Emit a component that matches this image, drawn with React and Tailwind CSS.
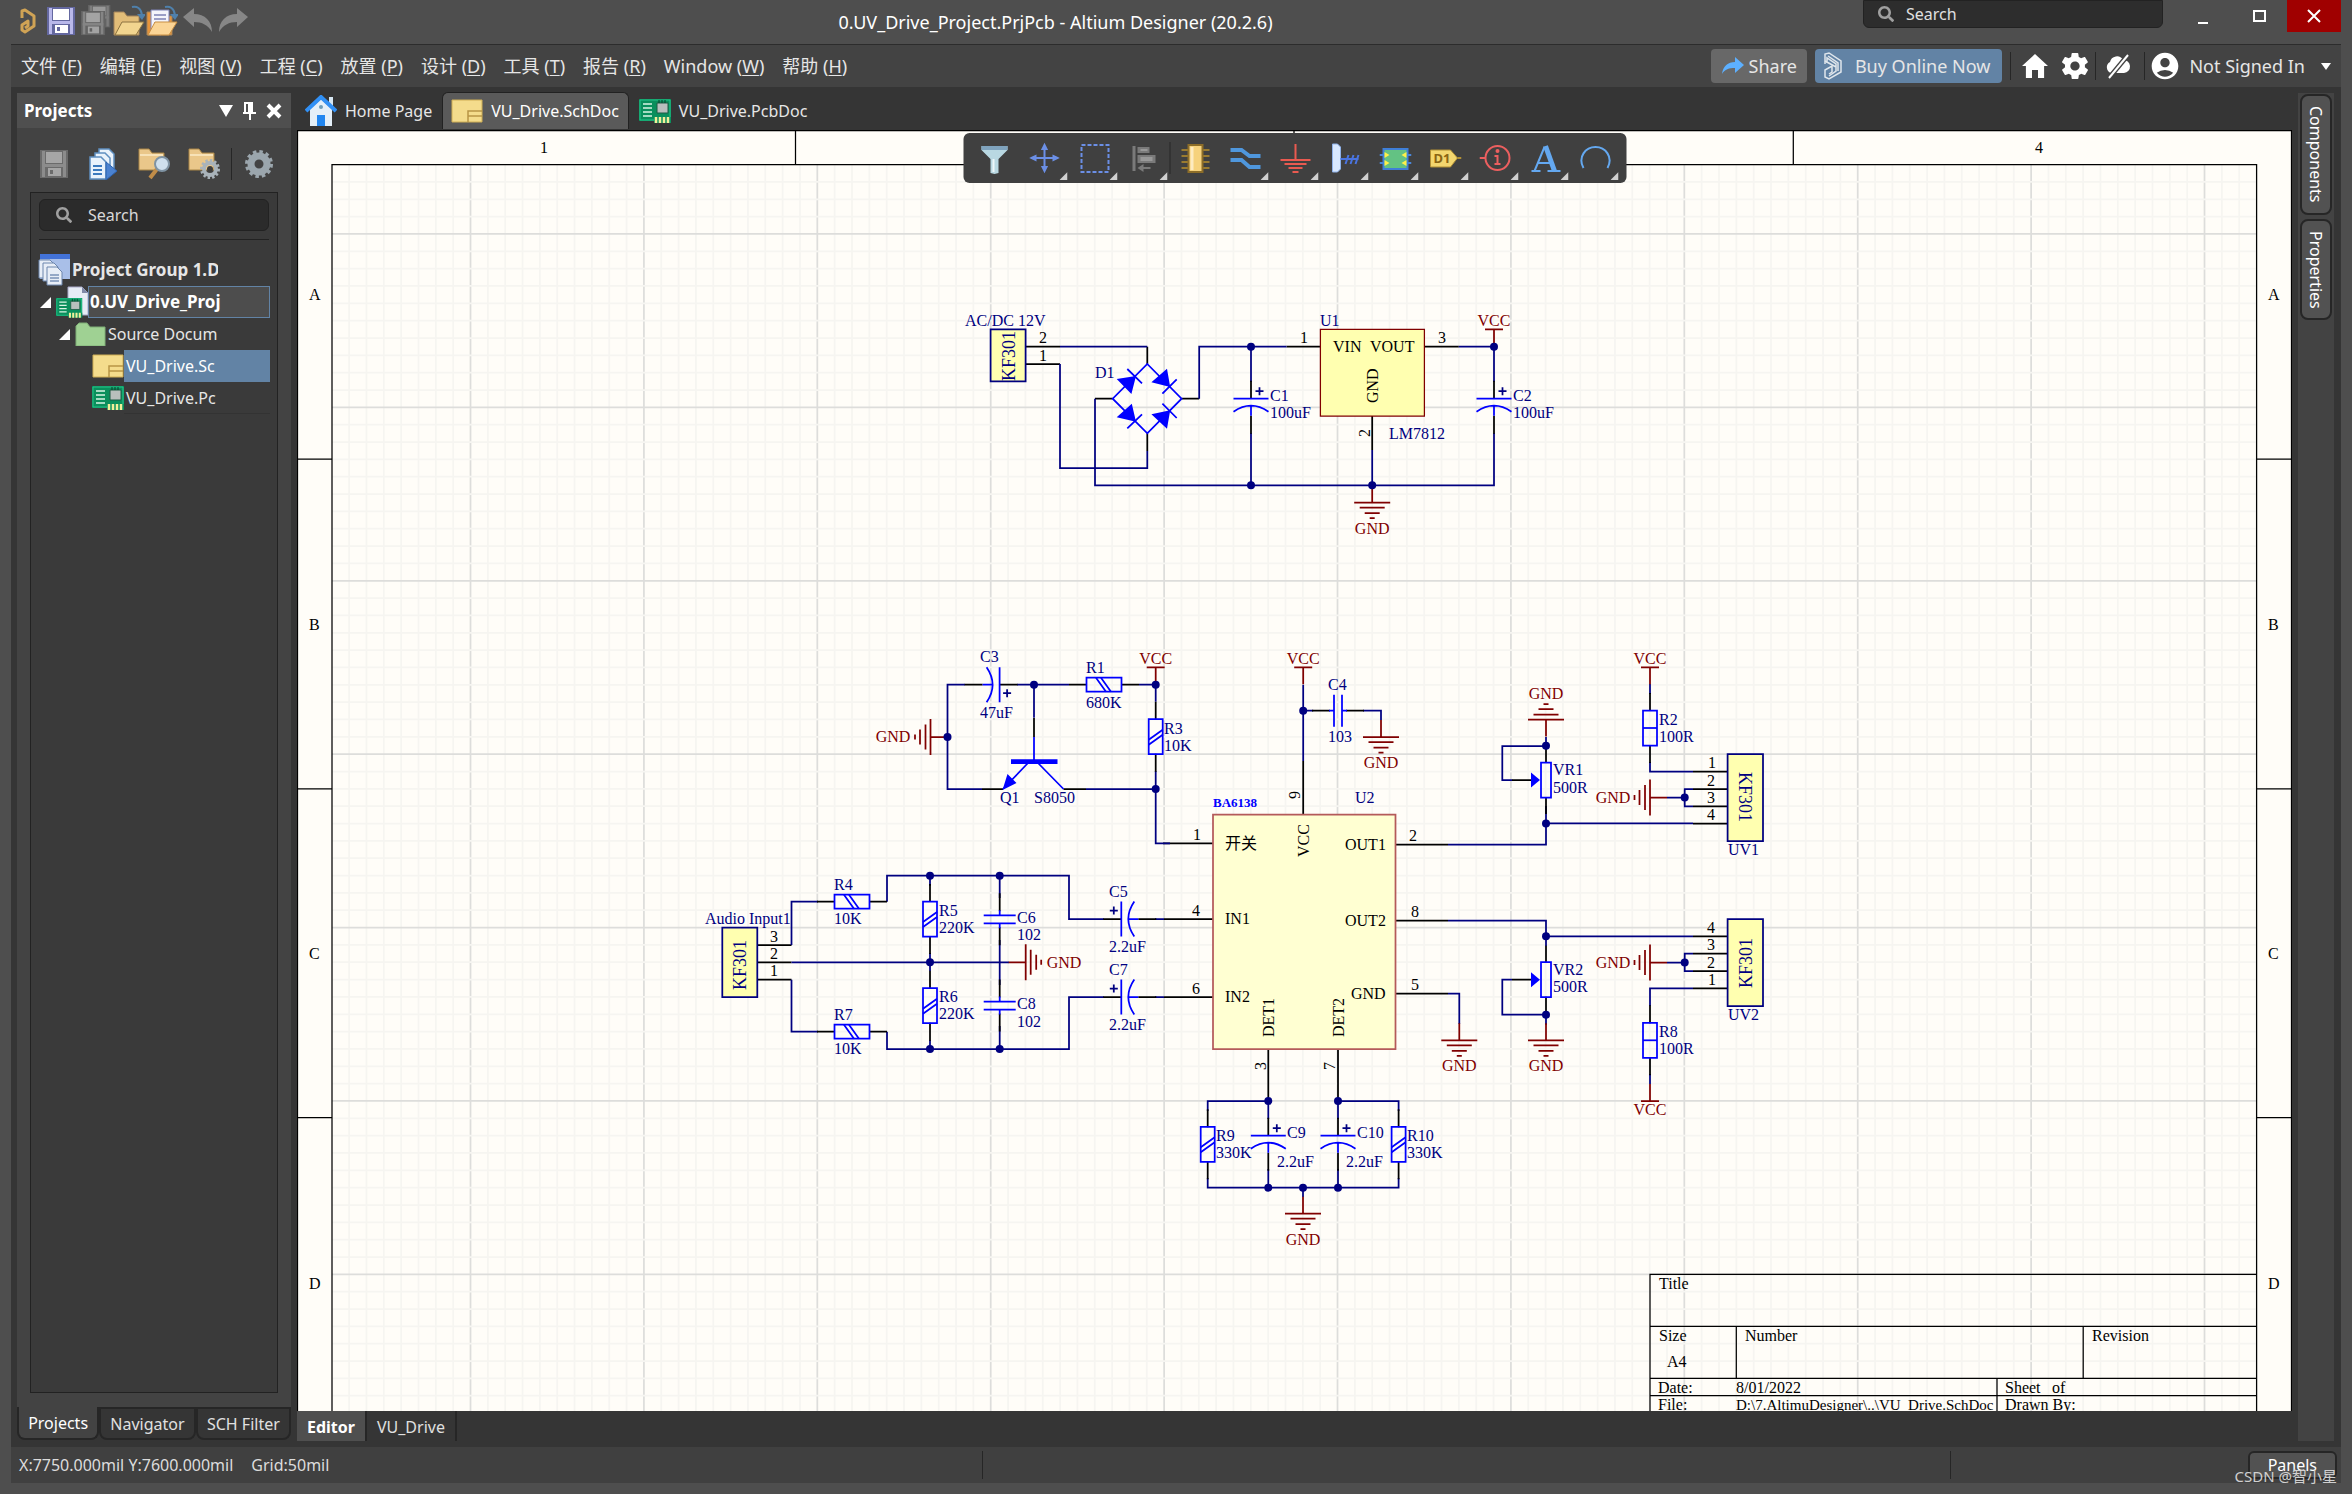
import { Fragment } from 'react';
import clsx from 'clsx';
import { IoMdHome, IoMdSettings } from 'react-icons/io';
import { MdAccountCircle } from 'react-icons/md';
import { FaSearch } from 'react-icons/fa';

const menus = [
  ['文件', 'F'],
  ['编辑', 'E'],
  ['视图', 'V'],
  ['工程', 'C'],
  ['放置', 'P'],
  ['设计', 'D'],
  ['工具', 'T'],
  ['报告', 'R'],
  ['Window', 'W'],
  ['帮助', 'H'],
];

/* ---------- icons ---------- */

const Logo = () => (
  <svg className="w-4 h-7" viewBox="0 0 16 28" fill="none" stroke="#d0a355" strokeWidth="3">
    <path d="M2 11V4l3-1 9 6v10l-9 6-3-2v-5l6-4v5l-3 2" strokeLinejoin="round" />
  </svg>
);

const Floppy = ({ edge, body, label }) => (
  <>
    <path d="M0 0h28v28H0z" fill={edge} />
    <path d="M2 1h3v26H2zM23 1h3v26h-3z" fill={body} />
    <path d="M6 2h16v11H6z" fill={label} />
    <path d="M2 14h24v3H2z" fill={body} />
    <path d="M8 18h13v8H8z" fill={label} />
    <path d="M10 20h3v4h-3z" fill={edge} />
  </>
);

const SaveIcon = ({ disabled }) => (
  <svg className="w-7 h-7" viewBox="0 0 28 28">
    {disabled ? (
      <Floppy edge="#6b6b6b" body="#8c8c8c" label="#a6a6a6" />
    ) : (
      <Floppy edge="#6468a0" body="#b9b8ea" label="#ffffff" />
    )}
  </svg>
);

const SaveAllIcon = () => (
  <svg className="w-8 h-8" viewBox="0 0 32 32">
    <g transform="translate(8 0) scale(.8)">
      <Floppy edge="#636363" body="#7d7d7d" label="#999999" />
    </g>
    <g transform="translate(1 6) scale(.86)">
      <Floppy edge="#636363" body="#858585" label="#a3a3a3" />
    </g>
  </svg>
);

const OpenIcon = ({ doc }) => (
  <svg className="w-8 h-8" viewBox="0 0 32 32">
    <path d="M1 30V7h10l3 4h12v19z" fill={doc ? '#e8943a' : '#e2bd78'} stroke="#a4845a" />
    {doc && (
      <>
        <path d="M5 28V5h18v16l-8 9z" fill="#f4f4fb" stroke="#7d81b5" />
        <path d="M8 10h12M8 14h12M8 18h10" stroke="#7d81b5" strokeWidth="1.5" />
      </>
    )}
    <path d="M9 17h22L23 30H2z" fill={doc ? '#fbd596' : '#f2d58f'} stroke={doc ? '#c98f42' : '#8c7340'} />
    <path d="M19 2c5-1 9 1 10 8" fill="none" stroke="#4f80ab" strokeWidth="2" />
    <path d="M24 9h9l-4 6z" fill="#4f80ab" />
  </svg>
);

const UndoIcon = ({ flip }) => (
  <svg className={clsx('w-8 h-8', flip && '-scale-x-100')} viewBox="0 0 32 32">
    <path d="M0 12L11 3v6c11 0 18 7 18 18-4-7-10-10-18-10v5z" fill="#878787" />
  </svg>
);

const DocsIcon = () => (
  <svg className="w-8 h-8" viewBox="0 0 32 32">
    <g stroke="#5f8fc0" fill="#e9f2fb" strokeWidth="1.5">
      <path d="M11 1h10l5 5v17H11z" />
      <path d="M7 5h10l5 5v17H7z" />
      <path d="M2 9h11l5 5v17H2z" />
    </g>
    <path d="M5 18h9M5 22h9M5 26h9" stroke="#3b79bd" strokeWidth="2" />
    <path d="M18 14l11 9-11 9z" fill="#4b82d0" stroke="#2b62b0" />
  </svg>
);

const FolderTool = ({ gear }) => (
  <svg className="w-8 h-8" viewBox="0 0 32 32">
    <path d="M1 22V1h10l3 4h12v17z" fill="#eac78a" stroke="#a98547" />
    <path d="M2 7h23" stroke="#f7e2b8" strokeWidth="2" />
    {gear ? (
      <>
        <circle cx="22" cy="21" r="8.5" fill="none" stroke="#a9b3ba" strokeWidth="3" strokeDasharray="2.4 2" />
        <circle cx="22" cy="21" r="6" fill="none" stroke="#a9b3ba" strokeWidth="4" />
        <circle cx="22" cy="21" r="3" fill="#3d3d3d" />
      </>
    ) : (
      <>
        <path d="M19 21l-7 9" stroke="#c08c48" strokeWidth="4" />
        <circle cx="24" cy="16" r="7" fill="#cfe0ee" stroke="#7f93a3" strokeWidth="2" />
      </>
    )}
  </svg>
);

const GearIcon = () => (
  <svg className="w-8 h-8" viewBox="0 0 32 32" fill="none" stroke="#9ba6ad">
    <circle cx="16" cy="16" r="12" strokeWidth="4" strokeDasharray="3.4 2.88" />
    <circle cx="16" cy="16" r="8" strokeWidth="7" />
  </svg>
);

const SchIcon = () => (
  <svg className="w-8 h-6" viewBox="0 0 32 24">
    <path d="M1 1h30v22H1z" fill="#f4dc8c" stroke="#cfae55" />
    <path d="M17 23V12h14M17 17h14" fill="none" stroke="#b89545" strokeWidth="1.5" />
  </svg>
);

const PcbArt = () => (
  <>
    <path d="M0 0h32v22H0z" fill="#0a8f5c" />
    <path d="M1 1h30v20H1z" fill="none" stroke="#24c48a" />
    <path d="M4 5h9M4 9h9M4 13h9M4 17h9" stroke="#d8f5e4" strokeWidth="1.5" />
    <path d="M18 4h11v10H18z" fill="#b9bfbd" stroke="#1d5c44" />
    <path d="M20 1v3M23 1v3M26 1v3" stroke="#06402a" />
    <path d="M15 18h17v6H15z" fill="#0a8f5c" />
    <path d="M17 18v6M21 18v6M25 18v6M29 18v6" stroke="#f3ef9a" strokeWidth="2.5" />
  </>
);

const PcbIcon = () => (
  <svg className="w-8 h-6" viewBox="0 0 32 24">
    <PcbArt />
  </svg>
);

const ProjectIcon = () => (
  <svg className="w-8 h-8" viewBox="0 0 32 32">
    <path d="M12 1h14l6 6v22H12z" fill="#e6ecf5" stroke="#a9a9c9" />
    <path d="M26 1v6h6z" fill="#7f89a8" />
    <g transform="translate(0 12) scale(.82)">
      <PcbArt />
    </g>
  </svg>
);

const GroupIcon = () => (
  <svg className="w-8 h-8" viewBox="0 0 32 32">
    <path d="M2 0h30v25H2z" fill="#a9bfe8" />
    <path d="M2 0h30v5H2z" fill="#4272d8" />
    <g fill="#e8eef7" stroke="#6d86ad">
      <path d="M1 6h11l4 4v14H1z" />
      <path d="M5 9h11l4 4v14H5z" />
      <path d="M9 13h10l5 5v13H9z" />
    </g>
    <path d="M12 21h9M12 24h9M12 27h9" stroke="#7a93b8" strokeWidth="1.5" />
  </svg>
);

const FolderIcon = () => (
  <svg className="w-8 h-6" viewBox="0 0 32 24">
    <path d="M1 24V4l3-3h8l3 4h15v19z" fill="#9fd193" stroke="#7fae76" />
  </svg>
);

const HouseIcon = () => (
  <svg className="w-8 h-8" viewBox="0 0 32 32">
    <path d="M24 2h4v10h-4z" fill="#d6e6f2" />
    <path d="M5 14L16 4l11 10v17H5z" fill="#e4eff8" />
    <path d="M1 16L16 2l15 14" fill="none" stroke="#3190f5" strokeWidth="4" />
    <circle cx="16" cy="12" r="2" fill="#6f9db8" />
    <path d="M12 20h8v11h-8z" fill="#2186f0" />
  </svg>
);

const BuyIcon = () => (
  <svg className="w-5 h-7" viewBox="0 0 20 28" fill="none" stroke="#dfe6ec" strokeWidth="1.5">
    <path d="M2 12V2l4-1 12 8v11L6 27l-4-2v-7l7-4v6l-3 2" />
    <path d="M4 11V6l9 6v7l-7 5M2 9l11 6M5 4l10 7v8" />
  </svg>
);

const CloudOff = () => (
  <svg className="w-7 h-7" viewBox="0 0 28 28">
    <path d="M7 21a6 6 0 0 1-1-11 7 7 0 0 1 13-2 6 6 0 0 1 1 13z" fill="#fff" />
    <path d="M24 3L5 26" stroke="#434343" strokeWidth="5" />
    <path d="M24 3L5 26" stroke="#fff" strokeWidth="2" />
  </svg>
);

const tools = [
  {
    name: 'Filter',
    art: (
      <>
        <path d="M3 4h26v4l-9 9v14l-4 1-4-1V17L3 8z" fill="#b9d8e2" />
        <path d="M3 4h26v4H3z" fill="#7fa3bd" />
        <path d="M14 17h2v13h-2z" fill="#eef7fa" />
      </>
    ),
  },
  {
    name: 'Move',
    more: true,
    art: (
      <g stroke="#6b8fe6" strokeWidth="2" fill="#6b8fe6">
        <path d="M16 4v24M4 16h24" />
        <path d="M16 3l2 4h-4zM16 29l2-4h-4zM3 16l4-2v4zM29 16l-4-2v4z" />
      </g>
    ),
  },
  {
    name: 'Select',
    more: true,
    art: <path d="M3 3h27v27H3z" fill="none" stroke="#6b8fe6" strokeWidth="2" strokeDasharray="4 2" />,
  },
  {
    name: 'Align',
    more: true,
    art: (
      <g fill="#7a7a7a">
        <path d="M4 4h3v25H4z" />
        <path d="M9 5h12v6H9zM9 13h18v8H9zM9 26l6-4v3h7v2h-7v3z" />
        <path d="M12 7h7v2h-7zM12 15h12v4H12z" fill="#999" />
      </g>
    ),
  },
  {
    name: 'Part',
    divider: true,
    art: (
      <>
        <path d="M2 8h28M2 14h28M2 20h28M2 26h28" stroke="#9a7b30" strokeWidth="2" />
        <path d="M9 3h14v27H9z" fill="#f6d27c" stroke="#8c6d28" strokeWidth="2" />
        <path d="M11 5h3v23h-3z" fill="#fdebc0" />
      </>
    ),
  },
  {
    name: 'Wire',
    more: true,
    art: (
      <g fill="none" stroke="#4f97dd" strokeWidth="4">
        <path d="M1 8h11l8 6h11" />
        <path d="M1 18h11l8 7h11" />
      </g>
    ),
  },
  {
    name: 'GND power port',
    more: true,
    art: <path d="M16 2v16M1 18h30M5 22h22M9 26h14M13 30h6" stroke="#ea5a50" strokeWidth="2" />,
  },
  {
    name: 'Bus entry',
    more: true,
    art: (
      <>
        <path d="M3 2h5l3 3v22l-3 3H3z" fill="#d8e8ff" stroke="#8fb2ea" />
        <path d="M11 17h18" stroke="#4a74e0" strokeWidth="2" />
        <path d="M16 22l3-9M21 22l3-9M26 22l3-9" stroke="#4a74e0" strokeWidth="2" />
      </>
    ),
  },
  {
    name: 'Sheet symbol',
    more: true,
    art: (
      <>
        <path d="M0 13h32M0 21h32" stroke="#4a86d8" strokeWidth="2" />
        <path d="M4 7h24v20H4z" fill="#63c283" stroke="#3f7fd8" strokeWidth="2" />
        <path d="M5 10l5 3-5 3zM5 18l5 3-5 3zM27 10l-5 3 5 3zM27 18l-5 3 5 3z" fill="#fff04a" />
      </>
    ),
  },
  {
    name: 'Port',
    more: true,
    art: (
      <>
        <path d="M1 8h20l7 8-7 9H1z" fill="#f3d66e" stroke="#b08f35" />
        <path d="M28 16h4" stroke="#b08f35" strokeWidth="2" />
        <text x="4" y="21" fontSize="13" fontWeight="700" fill="#8a6412">
          D1
        </text>
      </>
    ),
  },
  {
    name: 'Directive',
    more: true,
    art: (
      <g fill="none" stroke="#ec5f5f" strokeWidth="2">
        <circle cx="18" cy="16" r="12" />
        <path d="M0 16h6M15 14h3v8M15 22h6" />
        <circle cx="18" cy="9" r="1" />
      </g>
    ),
  },
  {
    name: 'Text string',
    more: true,
    art: (
      <g fill="none" stroke="#64a8f0">
        <path d="M15 5L5 29M9 21h12" strokeWidth="2" />
        <path d="M16 4l9 25" strokeWidth="5" />
        <path d="M2 29h9M18 29h13" strokeWidth="2" />
      </g>
    ),
  },
  {
    name: 'Arc',
    more: true,
    art: <path d="M4 26C-2 15 6 5 16 5s18 10 12 21" fill="none" stroke="#64a8f0" strokeWidth="2" />,
  },
];

/* ---------- schematic ---------- */

const NAVY = '#000080';
const BLUE = '#0000ff';
const RED = '#800000';

const Label = ({ x, y, children, color = NAVY, anchor, size = 16, rot = 0, bold }) => (
  <text
    transform={`translate(${x} ${y}) rotate(${rot})`}
    fill={color}
    fontSize={size}
    fontWeight={bold ? 700 : 400}
    textAnchor={anchor}
  >
    {children}
  </text>
);

const Dot = ({ x, y }) => <circle cx={x} cy={y} r="4" fill={NAVY} />;

const Gnd = ({ x, y, rot = 0, tx, ty }) => (
  <>
    <path
      transform={`translate(${x} ${y}) rotate(${rot})`}
      d="M0-17V0M-18 0h36M-12.5 5h25M-7.5 10.5h15M-2.5 15.5h5"
      stroke={RED}
    />
    <Label x={tx ?? x} y={ty ?? y + 31} color={RED} anchor="middle">
      GND
    </Label>
  </>
);

const Vcc = ({ x, y, down }) => (
  <>
    <path d={`M${x - 9} ${y}h18M${x} ${y}v${down ? -17 : 17}`} stroke={RED} />
    <Label x={x} y={down ? y + 14 : y - 3} color={RED} anchor="middle">
      VCC
    </Label>
  </>
);

// origin is the flat plate, the curved one sits below it
const PolarCap = ({ x, y, rot = 0 }) => (
  <g transform={`translate(${x} ${y}) rotate(${rot})`}>
    <path d="M0-18V0M0 17v18" stroke="#000" />
    <path d="M-17.5 0h35M-17.5 13Q0 1 17.5 13M0 7v10" stroke={BLUE} />
    <path d="M4.5-7.5h8M8.5-11.5v8" stroke={NAVY} />
  </g>
);

const Cap = ({ x, y, rot = 0 }) => (
  <g transform={`translate(${x} ${y}) rotate(${rot})`}>
    <path d="M0-26V-8M0 8V26" stroke="#000" />
    <path d="M-16-4h32M-16 4h32M0-9v5M0 4v5" stroke={BLUE} />
  </g>
);

const Res = ({ x, y, rot = 0, plain }) => (
  <g transform={`translate(${x} ${y}) rotate(${rot})`}>
    <path d="M0-35v18M0 17v18" stroke="#000" />
    <path d="M-7-17.5H7v35H-7z" stroke={BLUE} />
    <path d={plain ? 'M-7 0H7' : 'M-7 3L7-7M-7 8L7-2'} stroke={BLUE} />
  </g>
);

const Pot = ({ x, y }) => (
  <>
    <path d={`M${x} ${y - 34}v17M${x} ${y + 17}v17M${x - 34} ${y}h19`} stroke="#000" />
    <path d={`M${x - 5} ${y - 17.5}h10v35h-10z`} stroke={BLUE} />
    <path d={`M${x - 15} ${y - 7.5}l9 7.5-9 7.5z`} fill={BLUE} />
  </>
);

const wires = [
  'M1060 346.7h87.3M1060 364v104h87.3v-17',
  'M1095 398.7v86.6H1494V433M1251 433v52.3M1372.2 450v35.3',
  'M1199.2 398.7v-52h87.3M1251 346.7v35M1458.8 346.7H1494v35',
  'M965 684.7h-17.5V789H982M1017 684.7h52M1034 684.7v33M1139 684.7h16.7v17M1086 789h69.7v54.3H1170M1155.7 771v18',
  'M1303.2 684.7V761M1303.2 710.7h10M1363 710.7h18V720',
  'M1448 844.5h98v-21.2H1693M1448 920.7h98v15.6H1693M1448 993.5h11.3V1024',
  'M1546 737v9h-43.7v34h10M1546 806v17M1546 936v10M1512 979.7h-9.7v35H1546v10',
  'M1650 684v10M1650 762v9.5h43M1693 789h-8.3v17.3h8.3M1684.7 797.6H1667',
  'M1650 1006v-17.7h43M1650 1074v10M1693 953.6h-8.3V971h8.3M1684.7 962.6H1667',
  'M791.5 945v-43.3H818M791.5 979.7v52H818M791.5 962.3H1009',
  'M887 901.7v-26h182V919h35M887 1031.7v17.3h182v-52h35M930 875.7v10M930 953v18M930 1040v9',
  'M999.7 875.7V898M999.7 940v45M999.7 1026v23M1155 919h9M1155 997h9',
  'M1207.7 1111v-10H1268.3v18M1338 1119v-18h60.6v10M1207.7 1178v9.7H1398.6V1178M1268.3 1169v18.7M1338 1169v18.7M1303 1187.7V1197',
];

const pins = [
  'M1025.7 346.7H1060M1025.7 364H1060M1147.3 346.7V364M1147.3 433.3V451M1095 398.7h17.7M1181.6 398.7h17.6',
  'M1286.5 346.7h34M1424.5 346.7h34.3M1372.2 416v34',
  'M1034 718v19M982 789h21M1063.5 789H1086',
  'M1163 843.3h50M1164 919h49M1164 997h49M1303.2 761v53M1395.6 844.5H1448M1395.6 920.7H1448M1395.6 993.5H1448M1268.3 1049v52M1338 1049v52',
  'M1693 771.5h34.6M1693 789h34.6M1693 806.3h34.6M1693 823.5h34.6',
  'M1693 936.3h34.6M1693 953.6h34.6M1693 971h34.6M1693 988.3h34.6',
  'M757.3 945h34.2M757.3 962.3h34.2M757.3 979.7h34.2',
];

const dots = [
  [1251, 346.7], [1494, 346.7], [1251, 485.3], [1372.2, 485.3],
  [947.5, 737], [1034, 684.7], [1155.7, 684.7], [1155.7, 789], [1303.2, 710.7],
  [930, 875.7], [999.7, 875.7], [930, 962.3], [930, 1049], [999.7, 1049],
  [1546, 745.7], [1546, 823.4], [1546, 936.3], [1546, 1014.7],
  [1684.7, 797.6], [1684.7, 962.6],
  [1268.3, 1101], [1338, 1101], [1268.3, 1187.7], [1303, 1187.7], [1338, 1187.7],
];

const labels = [
  ['AC/DC 12V', 965, 326], ['D1', 1095, 378], ['C1', 1270, 401], ['100uF', 1270, 418],
  ['U1', 1320, 326], ['LM7812', 1389, 439], ['C2', 1513, 401], ['100uF', 1513, 418],
  ['C3', 980, 662], ['47uF', 980, 718], ['R1', 1086, 673], ['680K', 1086, 708],
  ['R3', 1164, 734], ['10K', 1164, 751], ['Q1', 1000, 803], ['S8050', 1034, 803],
  ['C4', 1328, 690], ['103', 1328, 742], ['U2', 1355, 803],
  ['Audio Input1', 705, 924], ['R4', 834, 890], ['10K', 834, 924], ['R7', 834, 1020], ['10K', 834, 1054],
  ['R5', 939, 916], ['220K', 939, 933], ['R6', 939, 1002], ['220K', 939, 1019],
  ['C6', 1017, 923], ['102', 1017, 940], ['C8', 1017, 1009], ['102', 1017, 1027],
  ['C5', 1109, 897], ['2.2uF', 1109, 952], ['C7', 1109, 975], ['2.2uF', 1109, 1030],
  ['VR1', 1553, 775], ['500R', 1553, 793], ['VR2', 1553, 975], ['500R', 1553, 992],
  ['R2', 1659, 725], ['100R', 1659, 742], ['R8', 1659, 1037], ['100R', 1659, 1054],
  ['UV1', 1728, 855], ['UV2', 1728, 1020],
  ['R9', 1216, 1141], ['330K', 1216, 1158], ['C9', 1287, 1138], ['2.2uF', 1277, 1167],
  ['C10', 1357, 1138], ['2.2uF', 1346, 1167], ['R10', 1407, 1141], ['330K', 1407, 1158],
];

const pinLabels = [
  ['VIN', 1333, 352], ['VOUT', 1370, 352], ['IN1', 1225, 924], ['IN2', 1225, 1002],
  ['开关', 1225, 849], ['OUT1', 1345, 850], ['OUT2', 1345, 926], ['GND', 1351, 999],
  ['2', 1039, 343], ['1', 1039, 361], ['1', 1300, 343], ['3', 1438, 343],
  ['1', 1193, 840], ['4', 1192, 916], ['6', 1192, 994], ['2', 1409, 841], ['8', 1411, 917], ['5', 1411, 990],
  ['1', 1708, 768], ['2', 1707, 786], ['3', 1707, 803], ['4', 1707, 820],
  ['4', 1707, 933], ['3', 1707, 950], ['2', 1707, 968], ['1', 1708, 985],
  ['3', 770, 942], ['2', 770, 959], ['1', 770, 976],
];

const sheetLabels = [
  ['Title', 1659, 1289], ['Size', 1659, 1341], ['A4', 1667, 1367], ['Number', 1745, 1341], ['Revision', 2092, 1341],
  ['Date:', 1658, 1393], ['8/01/2022', 1736, 1393], ['Sheet', 2005, 1393], ['of', 2052, 1393],
  ['File:', 1658, 1410], ['Drawn By:', 2005, 1410],
  ['1', 540, 153], ['4', 2035, 153],
  ['A', 309, 300], ['B', 309, 630], ['C', 309, 959], ['D', 309, 1289],
  ['A', 2268, 300], ['B', 2268, 630], ['C', 2268, 959], ['D', 2268, 1289],
];

const upright = [
  ['GND', 1378, 403], ['2', 1370, 437], ['9', 1300, 799], ['VCC', 1309, 857],
  ['DET1', 1274, 1037], ['DET2', 1344, 1037], ['3', 1266, 1070], ['7', 1335, 1070],
];

const STEP = 17.34;
const columns = Array.from({ length: 111 }, (_, i) => i + 1);
const rows = Array.from({ length: 71 }, (_, i) => i + 1);

const Grid = () => (
  <g>
    {columns.map((k) => (
      <path
        key={k}
        d={`M${331.8 + k * STEP} 165V1411`}
        stroke={k % 10 === 8 ? '#dddddb' : '#f6f5f1'}
      />
    ))}
    {rows.map((k) => (
      <path
        key={k}
        d={`M332 ${164.6 + k * STEP}H2256`}
        stroke={k % 10 === 4 ? '#dddddb' : '#f6f5f1'}
      />
    ))}
  </g>
);

const Schematic = () => (
  <svg
    className="block w-full h-full bg-[#fffdf8] font-['Liberation_Serif','Noto_Sans_CJK_SC',serif]"
    viewBox="297 130 1995 1281"
    preserveAspectRatio="xMinYMin slice"
    fill="none"
    strokeWidth="1.75"
    role="img"
    aria-label="VU_Drive.SchDoc"
  >
    <Grid />

    <g stroke="#000" strokeWidth="1.25">
      <path d="M297.5 130V1411M2291.5 130V1411M297 130.5H2292" />
      <path d="M332 1411V164.5H2256.6V1411" />
      <path d="M795.5 130v34M1294 130v34M1793.3 130v34" />
      <path d="M297 459h35M297 788.8h35M297 1117.7h35M2257 459h35M2257 788.8h35M2257 1117.7h35" />
      <path d="M1650 1411V1274.3H2256M1650 1326.3H2256M1650 1378.3H2256M1650 1395.7H2256" />
      <path d="M1736.3 1326v52M2083.2 1326v52M1997 1378v33" />
    </g>

    {pins.map((d) => (
      <path key={d} d={d} stroke="#000" />
    ))}
    {wires.map((d) => (
      <path key={d} d={d} stroke={NAVY} />
    ))}

    {/* part bodies */}
    <g fill="#ffffb0" stroke={NAVY}>
      <path d="M990.6 329.3h35v52h-35zM722.3 927.7h35V997h-35zM1727.6 754H1763v87h-35.4zM1727.6 919H1763v87h-35.4z" />
      <path d="M1320.4 329.3h104V416h-104z" stroke={RED} strokeWidth="1.25" />
      <path d="M1213 814.7h182.5V1049H1213z" fill="#ffffd2" stroke="#b45a5a" />
    </g>

    {/* bridge rectifier */}
    <g stroke={BLUE}>
      <path d="M1147.3 364l34.3 34.7-34.3 34.6-34.6-34.6z" />
      <path d="M1127.3 369l14.7 14.3M1162.4 393.7l14.3-14.4M1127.3 428.3l14.7-14M1162.4 403.7l14.3 14.3" />
      <path
        d="M1116.7 379l14.7 15 4.6-18zM1151.4 382.3l15.6-13.6 3.2 18.3zM1116.7 417.3l15.1-13.6 4.2 18zM1151.4 414.3l15.6 14.4 3.2-18.4z"
        fill={BLUE}
        stroke="none"
      />
    </g>

    {/* transistor */}
    <g stroke={BLUE}>
      <path d="M1034 737v24M1028 763l-25 26M1038 763l25.5 26" />
      <path d="M1011 759.3h46.5v4.7H1011zM1002.5 790l5-16 9 9z" fill={BLUE} stroke="none" />
    </g>

    <PolarCap x={1251} y={398.7} />
    <PolarCap x={1494} y={398.7} />
    <PolarCap x={999.6} y={684.7} rot={90} />
    <PolarCap x={1121.3} y={919} rot={-90} />
    <PolarCap x={1121.3} y={997} rot={-90} />
    <PolarCap x={1268.3} y={1135.7} />
    <PolarCap x={1338} y={1135.7} />

    <Cap x={1338} y={710.7} rot={90} />
    <Cap x={999.7} y={919.3} />
    <Cap x={999.7} y={1005.5} />

    <Res x={1104} y={684.7} rot={90} />
    <Res x={852} y={901.7} rot={90} />
    <Res x={852} y={1031.7} rot={90} />
    <Res x={1155.7} y={736.7} />
    <Res x={930} y={919} />
    <Res x={930} y={1005.7} />
    <Res x={1207.7} y={1144.3} />
    <Res x={1398.6} y={1144.3} />
    <Res x={1650} y={728} plain />
    <Res x={1650} y={1040.3} plain />

    <Pot x={1546} y={780} />
    <Pot x={1546} y={979.7} />

    <Gnd x={1372.2} y={502.7} />
    <Gnd x={930.5} y={737} rot={90} tx={893} ty={742} />
    <Gnd x={1381} y={737} />
    <Gnd x={1546} y={719.5} rot={180} ty={699} />
    <Gnd x={1650} y={797.6} rot={90} tx={1613} ty={803} />
    <Gnd x={1650} y={962.6} rot={90} tx={1613} ty={968} />
    <Gnd x={1025.7} y={962.3} rot={-90} tx={1064} ty={968} />
    <Gnd x={1459.3} y={1040.3} />
    <Gnd x={1546} y={1040.3} />
    <Gnd x={1303} y={1213.7} />

    <Vcc x={1494} y={329.3} />
    <Vcc x={1155.7} y={667.3} />
    <Vcc x={1303.2} y={667.3} />
    <Vcc x={1650} y={667.3} />
    <Vcc x={1650} y={1101} down />

    {dots.map(([x, y]) => (
      <Dot key={`${x}-${y}`} x={x} y={y} />
    ))}
    {labels.map(([text, x, y]) => (
      <Label key={`${x}-${y}`} x={x} y={y}>
        {text}
      </Label>
    ))}
    {[...pinLabels, ...sheetLabels].map(([text, x, y]) => (
      <Label key={`${x}-${y}`} x={x} y={y} color="#000">
        {text}
      </Label>
    ))}
    {upright.map(([text, x, y]) => (
      <Label key={`${x}-${y}`} x={x} y={y} color="#000" rot={-90}>
        {text}
      </Label>
    ))}
    <Label x={1736} y={1410} color="#000" size={15}>
      D:\7.AltimuDesigner\..\VU_Drive.SchDoc
    </Label>
    <Label x={1213} y={807} color={BLUE} size={13} bold>
      BA6138
    </Label>
    <Label x={1015} y={381} size={18} rot={-90}>
      KF301
    </Label>
    <Label x={746} y={990} size={18} rot={-90}>
      KF301
    </Label>
    <Label x={1739} y={772} size={18} rot={90}>
      KF301
    </Label>
    <Label x={1752} y={988} size={18} rot={-90}>
      KF301
    </Label>
  </svg>
);

/* ---------- window parts ---------- */

const TitleBar = () => (
  <header className="flex h-11 shrink-0">
    <div className="flex items-center gap-px pl-5 pb-[2px]">
      <Logo />
      <button aria-label="Save" className="ml-[10px]"><SaveIcon /></button>
      <button aria-label="Save all" className="ml-1"><SaveAllIcon /></button>
      <button aria-label="Open"><OpenIcon /></button>
      <button aria-label="Open project"><OpenIcon doc /></button>
      <button aria-label="Undo" className="ml-1"><UndoIcon /></button>
      <button aria-label="Redo"><UndoIcon flip /></button>
    </div>
    <h1 className="flex-1 text-lg text-center text-white leading-11">
      0.UV_Drive_Project.PrjPcb - Altium Designer (20.2.6)
    </h1>
    <label className="flex items-center h-7 w-75 gap-3 px-[14px] bg-[#2d2d2d] border border-[#222] rounded-b-md">
      <FaSearch className="w-4 h-4 text-[#a0a0a0] shrink-0" />
      <input
        aria-label="Search commands"
        placeholder="Search"
        className="w-full text-base text-white bg-transparent outline-none placeholder:text-[#e0e0e0]"
      />
    </label>
    <div className="flex items-start ml-3 mr-[11px] text-white">
      <button aria-label="Minimize" className="flex items-end justify-center w-14 h-8 pb-2">
        <span className="w-[10px] h-[2px] bg-white"></span>
      </button>
      <button aria-label="Maximize" className="flex items-center justify-center w-14 h-8">
        <span className="w-[13px] h-3 border-2 border-white"></span>
      </button>
      <button aria-label="Close" className="flex items-center justify-center w-[54px] h-8 bg-[#a00000]">
        <svg className="w-4 h-4" viewBox="0 0 16 16" stroke="#fff" strokeWidth="2">
          <path d="M2 2l12 12M14 2L2 14" />
        </svg>
      </button>
    </div>
  </header>
);

const Rule = ({ className }) => <span className={clsx('w-px bg-[#262626]', className)}></span>;

const MenuBar = () => (
  <nav className="flex items-center justify-between h-[43px] shrink-0 bg-[#434343] border-t border-[#2c2c2c] text-lg text-[#e6e6e6]">
    <div className="flex gap-[18px] pl-[10px]">
      {menus.map(([name, key]) => (
        <button key={key} className="whitespace-nowrap">
          {name} (<u className="underline-offset-2">{key}</u>)
        </button>
      ))}
    </div>
    <div className="flex items-center pr-[10px]">
      <button className="flex items-center gap-1 px-[10px] mr-2 h-[34px] bg-[#686868] rounded">
        <svg className="w-6 h-5" viewBox="0 0 24 20">
          <path d="M1 18C2 10 7 6 14 6V1l9 8-9 8v-5C8 12 4 13 1 18z" fill="#5db0ff" />
        </svg>
        Share
      </button>
      <button className="flex items-center gap-3 px-2 pr-3 h-[34px] bg-[#6283a5] rounded">
        <BuyIcon />
        Buy Online Now
      </button>
      <Rule className="h-7 mx-2" />
      <button aria-label="Home"><IoMdHome className="w-8 h-8 text-white" /></button>
      <button aria-label="Settings" className="ml-2"><IoMdSettings className="w-8 h-8 text-white" /></button>
      <Rule className="h-7 mx-1" />
      <button aria-label="Offline" className="mx-1"><CloudOff /></button>
      <Rule className="h-7 ml-2 mr-1" />
      <button className="flex items-center gap-2">
        <MdAccountCircle className="w-8 h-8 text-white" />
        Not Signed In
        <svg className="w-[10px] h-2 ml-2" viewBox="0 0 10 8">
          <path d="M0 1h10L5 8z" fill="#fff" />
        </svg>
      </button>
    </div>
  </nav>
);

const Arrow = () => (
  <svg className="w-3 h-3 shrink-0" viewBox="0 0 12 12">
    <path d="M11 1v11H0z" fill="#fff" />
  </svg>
);

const ProjectTree = () => (
  <ul className="mt-[14px] text-base text-[#e6e6e6] leading-7">
    <li className="flex h-8 pl-[7px]">
      <GroupIcon />
      <button className="w-[148px] px-0.5 overflow-hidden text-[17px] font-bold text-left whitespace-nowrap">
        Project Group 1.D
      </button>
    </li>
    <li className="flex items-center h-8 pl-[9px] mr-[7px]">
      <Arrow />
      <span className="ml-1"><ProjectIcon /></span>
      <button className="flex-1 h-8 px-px text-[17px] font-bold leading-6 text-left text-white bg-[#4d4d4d] border border-[#6283a5] whitespace-nowrap">
        0.UV_Drive_Proj
      </button>
    </li>
    <li className="flex items-center h-8 pl-7">
      <Arrow />
      <span className="ml-1"><FolderIcon /></span>
      <button className="w-[110px] h-8 pl-px overflow-hidden leading-6 text-left whitespace-nowrap">Source Docum</button>
    </li>
    <li className="flex items-center h-8 pl-[61px] mr-[7px]">
      <SchIcon />
      <button className="flex-1 h-8 pl-0.5 leading-6 text-left text-white bg-[#6283a5]">VU_Drive.Sc</button>
    </li>
    <li className="flex items-center h-8 pl-[61px] mr-[7px]">
      <PcbIcon />
      <button className="flex-1 h-8 pl-0.5 leading-6 text-left border-b border-[#333]">VU_Drive.Pc</button>
    </li>
  </ul>
);

const ProjectsPanel = () => (
  <aside className="flex flex-col w-[274px] shrink-0 mb-[7px] mt-[6px]">
    <div className="flex items-center h-[35px] px-[7px] shrink-0 bg-[#4f4f4f] text-white">
      <h2 className="flex-1 text-[17px] font-bold">Projects</h2>
      <svg className="w-[68px] h-5" viewBox="0 0 68 20" fill="#fff">
        <path d="M3 4h14l-7 12zM28 1h9v10h3v2h-5v6h-2v-6h-6v-2h1zM30 3v8h2V3z" />
        <path d="M52 4l12 12M64 4L52 16" stroke="#fff" strokeWidth="4" />
      </svg>
    </div>
    <div className="flex flex-col flex-1 px-[13px] pb-[14px] bg-[#434343]">
      <div className="flex items-center h-16 pl-[10px] pt-2">
        <button aria-label="Save document"><SaveIcon disabled /></button>
        <button aria-label="Compile" className="ml-5"><DocsIcon /></button>
        <button aria-label="Explore" className="ml-[18px]"><FolderTool /></button>
        <button aria-label="Project options" className="ml-[18px]"><FolderTool gear /></button>
        <Rule className="h-8 mx-[11px]" />
        <button aria-label="Settings"><GearIcon /></button>
      </div>
      <div className="flex-1 bg-[#3a3a3a] border border-[#222]">
        <label className="flex items-center gap-4 h-8 mx-2 mt-[6px] px-4 bg-[#2b2b2b] border border-[#222] rounded-md">
          <FaSearch className="w-4 h-4 text-[#a0a0a0] shrink-0" />
          <input
            aria-label="Search projects"
            placeholder="Search"
            className="w-full text-base text-white bg-transparent outline-none placeholder:text-[#d8d8d8]"
          />
        </label>
        <div className="mx-2 mt-2 border-t border-[#222]"></div>
        <ProjectTree />
      </div>
    </div>
    <div className="flex h-[33px] shrink-0 text-base text-[#e0e0e0]">
      {['Projects', 'Navigator', 'SCH Filter'].map((name, i) => (
        <button
          key={name}
          className={clsx(
            'flex-auto border-2 border-[#262626] rounded-b-lg whitespace-nowrap',
            i === 0 ? 'bg-[#434343] border-t-0 text-white' : 'bg-[#353535]'
          )}
        >
          {name}
        </button>
      ))}
    </div>
  </aside>
);

const Toolbar = () => (
  <div className="absolute flex items-center h-[50px] px-[6px] -translate-x-1/2 bg-[#404040] rounded-md top-[3px] left-1/2">
    {tools.map(({ name, art, more, divider }) => (
      <Fragment key={name}>
        {divider && <Rule className="h-8" />}
        <button aria-label={name} className="relative flex items-center justify-center w-[50px] h-[50px]">
          <svg className="w-8 h-8" viewBox="0 0 32 32">
            {art}
          </svg>
          {more && (
            <svg className="absolute w-2 h-2 right-0.5 bottom-[3px]" viewBox="0 0 8 8">
              <path d="M8 0v8H0z" fill="#d0d0d0" />
            </svg>
          )}
        </button>
      </Fragment>
    ))}
  </div>
);

const Editor = () => (
  <main className="flex flex-col flex-1 min-w-0 mx-[6px]">
    <div className="flex items-end h-[43px] pb-px shrink-0 text-base text-[#e6e6e6] whitespace-nowrap">
      <button className="flex items-center gap-2 h-9 pl-2 pr-[10px]">
        <HouseIcon />
        Home Page
      </button>
      <button className="flex items-center gap-2 h-[37px] pl-2 pr-[9px] text-white bg-[#5a5a5a] border border-b-0 border-[#222] rounded-t-md">
        <SchIcon />
        VU_Drive.SchDoc
      </button>
      <button className="flex items-center gap-2 h-9 pl-[10px]">
        <PcbIcon />
        VU_Drive.PcbDoc
      </button>
    </div>
    <div className="relative flex-1 min-h-0 overflow-hidden">
      <Schematic />
      <Toolbar />
    </div>
    <div className="flex h-9 pb-[6px] shrink-0 text-base">
      <button className="px-[10px] pt-0.5 font-bold text-white bg-[#4f4f4f] border-r-2 border-[#262626]">Editor</button>
      <button className="px-[10px] pt-0.5 text-[#e0e0e0] border-r-2 border-[#262626]">VU_Drive</button>
    </div>
  </main>
);

const SidePanels = () => (
  <div className="flex flex-col items-center w-9 gap-1 pt-px mt-[6px] mb-[6px] mr-[7px] shrink-0 bg-[#434343]">
    {['Components', 'Properties'].map((name) => (
      <button
        key={name}
        className="flex items-center justify-center w-8 py-[10px] text-base leading-6 text-white bg-[#525252] border-2 border-[#262626] rounded-lg"
      >
        <span className="[writing-mode:vertical-rl]">{name}</span>
      </button>
    ))}
  </div>
);

const StatusBar = () => (
  <footer className="relative flex items-center h-9 shrink-0 pl-2 pr-1 bg-[#404040] text-base text-[#dcdcdc]">
    <span>X:7750.000mil Y:7600.000mil</span>
    <span className="flex-1 ml-[18px]">Grid:50mil</span>
    <Rule className="h-7 mr-[967px]" />
    <Rule className="h-7 mr-[297px]" />
    <button className="h-7 px-[18px] text-white bg-[#525252] border-2 border-[#262626] rounded-md">Panels</button>
    <span className="absolute text-[15px] text-[#d0d0d0] right-1 -bottom-1 whitespace-nowrap">CSDN @智小星</span>
  </footer>
);

const App = () => {
  return (
    <div className="flex flex-col h-screen overflow-hidden bg-[#4e4e4e] font-['Noto_Sans','Noto_Sans_CJK_SC',sans-serif]">
      <TitleBar />
      <div className="flex flex-col flex-1 min-h-0 mx-[11px] mb-[11px]">
        <MenuBar />
        <div className="flex flex-1 min-h-0 pl-[6px] bg-[#353535]">
          <ProjectsPanel />
          <Editor />
          <SidePanels />
        </div>
        <StatusBar />
      </div>
    </div>
  );
};

export default App;
